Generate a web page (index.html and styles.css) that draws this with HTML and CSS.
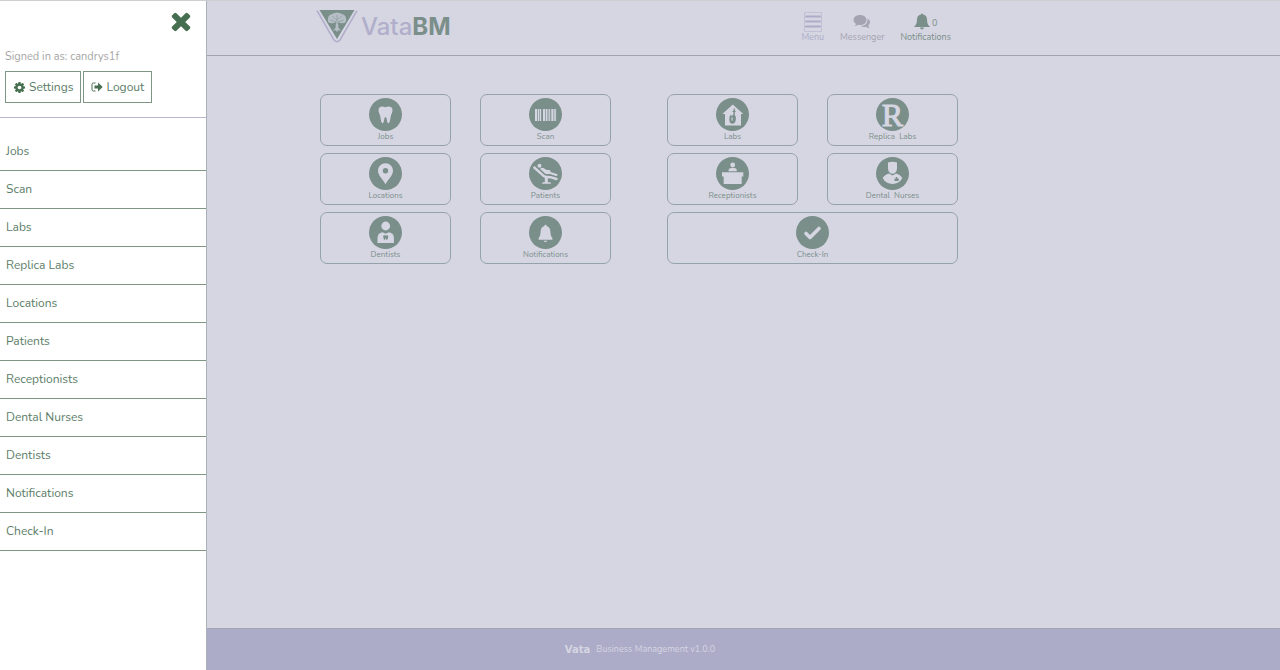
FILE: index.html
```html
<!DOCTYPE html>
<html lang="en">
<head>
    <meta charset="UTF-8">
    <meta name="viewport" content="width=device-width, initial-scale=1.0">
    <title>VataBM</title>
    <link rel="stylesheet" href="styles.css">
</head>
<body>
    <header class="header">
        <div class="header-inner">
            <a href="#" class="logo">
                <svg class="logo-mark" viewBox="0 0 42 33">
                    <path d="M1 .6L18 30Q21 33.500 24 30L41 .6" fill="none" stroke="#b0aecb" stroke-width="1.600"/>
                    <path d="M3.500 0h35L21 29z" fill="#7a8e8a"/>
                    <path d="M20 12q-3 2-6 1-3-1-2-4 0-4 4-5 5-3 10 0 4 1 4 5 1 3-2 4-3 1-6-1l.5 6 3 3-3-1-1.500 2-1.500-2-3 1 3-3z" fill="#b4bec4"/>
                    <path d="M21 14V5M21 10l-5-4M21 10l5-4M20 12l-6-2M22 12l6-2" fill="none" stroke="#8d9fa0" stroke-width=".7"/>
                </svg>
                <span class="logo-text">Vata<b>BM</b></span>
            </a>
            <nav class="top-nav">
                <a href="#" class="top-link light">
                    <span class="top-icon">
                        <svg width="18" height="20" viewBox="0 0 18 20" fill="none" stroke="#acabc8">
                            <path d="M.5.5h17v19H.5z" stroke-dasharray="2 1" stroke-width=".7"/>
                            <path d="M2 4.500h14M2 9.500h14M2 14.500h14" stroke-width="2" stroke-linecap="round"/>
                        </svg>
                    </span>
                    <span>Menu</span>
                </a>
                <a href="#" class="top-link grey">
                    <span class="top-icon">
                        <svg width="18" height="14" viewBox="0 0 18 14" fill="#a3a3b1">
                            <path d="M7 0c4 0 6.500 2.200 6.500 5S11 10 7 10q-1 0-2-.2Q3.500 11 1.500 11.200 2.700 10.300 3 9 .5 7.700.5 5C.5 2.200 3 0 7 0z"/>
                            <path d="M14.500 3.500q2.500 1.300 2.500 3.800 0 2-1.800 3.200.3 1.500 1.500 2.400-2.200 0-3.700-1.200-3 .6-5.300-.7 6.300-.5 6.800-5.500z"/>
                        </svg>
                    </span>
                    <span>Messenger</span>
                </a>
                <a href="#" class="top-link">
                    <span class="top-icon">
                        <svg width="16" height="20" viewBox="0 0 16 20" fill="#7a8e8a">
                            <path d="M7 2.500a1 1 0 0 1 2 0q4 .8 4 5 0 5 3 7.500H0q3-2.500 3-7.500 0-4.200 4-5zM6 15.500h4q-.3 2-2 2t-2-2z"/>
                        </svg>
                        <span class="count">0</span>
                    </span>
                    <span>Notifications</span>
                </a>
            </nav>
        </div>
    </header>

    <main class="main">
        <div class="tiles">
            <div class="tile-group">
                <a href="#" class="tile">
                    <svg class="tile-icon" viewBox="0 0 33 33">
                        <circle cx="16.500" cy="16.500" r="16.500"/>
                        <path class="fg" d="M16.300 9.300C20 7.500 23.500 8.300 23.500 12c0 2.500-1.200 4-1.700 6-.6 3-.8 7-2.500 7.300-1.500 0-1.200-6.300-2.800-6.300s-1.300 6.300-2.800 6.300C12 25 11.800 21 11.200 18c-.5-2-1.700-3.500-1.700-6 0-3.700 3.500-4.500 6.800-2.700z"/>
                    </svg>
                    <span>Jobs</span>
                </a>
                <a href="#" class="tile">
                    <svg class="tile-icon" viewBox="0 0 33 33">
                        <circle cx="16.500" cy="16.500" r="16.500"/>
                        <path class="fg" d="M6 11h2.300v12H6zM9 11h1v12H9zM10.600 11h1.600v12h-1.600zM14 11h2.300v12H14zM17 11h1v12h-1zM18.500 11h1v12h-1zM20.200 11h1v12h-1zM22.300 11h2.200v12h-2.200zM25 11h.8v12H25zM26.200 11h.9v12h-.9z"/>
                    </svg>
                    <span>Scan</span>
                </a>
                <a href="#" class="tile">
                    <svg class="tile-icon" viewBox="0 0 33 33">
                        <circle cx="16.500" cy="16.500" r="16.500"/>
                        <path class="fg" fill-rule="evenodd" d="M16.500 6.300c4.200 0 7.500 3.200 7.500 7.400 0 4.800-4.500 8-7.500 13.500C13.500 21.700 9 18.500 9 13.700c0-4.200 3.300-7.400 7.500-7.400zm0 4.700a2.700 2.700 0 1 0 0 5.400 2.700 2.700 0 0 0 0-5.400z"/>
                    </svg>
                    <span>Locations</span>
                </a>
                <a href="#" class="tile">
                    <svg class="tile-icon" viewBox="0 0 33 33">
                        <circle cx="16.500" cy="16.500" r="16.500"/>
                        <circle class="fg" cx="10.500" cy="8.700" r="2"/>
                        <path class="fg-line" d="M5.300 10.500l9 8.200q1.500 1.200 3.700 1.300l3.500.2 6 1.800" stroke-width="2.400"/>
                        <path class="fg-line" d="M12.300 11.800l4.700 4.200h4.300l6.200 2M14 11.800l3.500 2.200h3" stroke-width="2"/>
                        <path class="fg" d="M15.800 20h3v5.300h2.200q1 0 1 1.500h-9q0-1.500 1-1.500h1.800z"/>
                    </svg>
                    <span>Patients</span>
                </a>
                <a href="#" class="tile">
                    <svg class="tile-icon" viewBox="0 0 33 33">
                        <circle cx="16.500" cy="16.500" r="16.500"/>
                        <circle class="fg" cx="16.700" cy="10" r="4.400"/>
                        <path class="fg" d="M8.500 27v-5q0-5 5-5.800l3.200 1.500 3.200-1.500q5 .8 5 5.800v5z"/>
                        <path d="M16.700 19.500q2.500-1 2.500.8c0 1.200-.6 3.700-1.400 3.700-.7 0-.5-1.800-1.100-1.800s-.4 1.800-1.100 1.800c-.8 0-1.400-2.500-1.400-3.700q0-1.800 2.500-.8z"/>
                    </svg>
                    <span>Dentists</span>
                </a>
                <a href="#" class="tile">
                    <svg class="tile-icon" viewBox="0 0 33 33">
                        <circle cx="16.500" cy="16.500" r="16.500"/>
                        <path class="fg" d="M15.300 10q.2-1.300 1.200-1.300t1.200 1.300q3.500 1 3.700 5.500.2 5 2 6.500v1.700H9.600V22q1.800-1.500 2-6.500.2-4.500 3.700-5.500zM14.500 24.700h4q-.6 1.400-2 1.400t-2-1.400z"/>
                    </svg>
                    <span>Notifications</span>
                </a>
            </div>
            <div class="tile-group">
                <a href="#" class="tile">
                    <svg class="tile-icon" viewBox="0 0 33 33">
                        <circle cx="16.500" cy="16.500" r="16.500"/>
                        <path class="fg" d="M16.800 6.500L27.300 16H25v11.600H9V16H6.300z"/>
                        <path d="M14.500 17q1.500 1 2.500.2l.6-3-1.600-.9 1.600-.7.200-2.400 1.200.5-.2 1.800 1.200 1-1.200.8v2.900q1.500 1 1.100 4-.6 4.500-3.400 4.500-3.200 0-3.200-4.500 0-2.800 1.200-4.200z"/>
                        <path class="fg" d="M15.500 19.300l1.300.4-.4 3h-.9z"/>
                    </svg>
                    <span>Labs</span>
                </a>
                <a href="#" class="tile">
                    <svg class="tile-icon" viewBox="0 0 33 33">
                        <circle cx="16.500" cy="16.500" r="16.500"/>
                        <text class="fg letter" x="16.500" y="27.500" text-anchor="middle">R</text>
                    </svg>
                    <span>Replica&nbsp; Labs</span>
                </a>
                <a href="#" class="tile">
                    <svg class="tile-icon" viewBox="0 0 33 33">
                        <circle cx="16.500" cy="16.500" r="16.500"/>
                        <circle class="fg" cx="16.700" cy="8" r="2.400"/>
                        <path class="fg" d="M12.500 14.300q0-3.300 2.800-3.300h2.800q2.800 0 2.800 3.300zM6 15.200h21.300v4.300h-1.600V27h-18v-7.500H6z"/>
                    </svg>
                    <span>Receptionists</span>
                </a>
                <a href="#" class="tile">
                    <svg class="tile-icon" viewBox="0 0 33 33">
                        <circle cx="16.500" cy="16.500" r="16.500"/>
                        <path class="fg" d="M12 5.500q4.500-1.300 9 0v6q0 3-2 4.500-2.500 1.500-5 0-2-1.500-2-4.500zM13 16.500l3.500 2 3.500-2q4.500 1 6.300 4.800-3.300 5.700-9.800 5.700t-9.800-5.700Q8.500 17.500 13 16.500z"/>
                        <path d="M18.500 21.500h1.300V20h1.400v1.500h1.500V24h-4.200z"/>
                    </svg>
                    <span>Dental&nbsp; Nurses</span>
                </a>
                <a href="#" class="tile wide">
                    <svg class="tile-icon" viewBox="0 0 33 33">
                        <circle cx="16.500" cy="16.500" r="16.500"/>
                        <path class="fg-line" d="M10 17.500l4 4 9-9" stroke-width="3.600"/>
                    </svg>
                    <span>Check-In</span>
                </a>
            </div>
        </div>
    </main>

    <footer class="footer">
        <b class="brand">Vata</b>
        <span>Business Management v1.0.0</span>
    </footer>

    <aside class="sidebar">
        <div class="account">
            <button type="button" class="close-btn" aria-label="Close">
                <svg width="28" height="28" viewBox="0 0 1792 1792" fill="#456f50"><path d="M1490 1322q0 40-28 68l-136 136q-28 28-68 28t-68-28l-294-294-294 294q-28 28-68 28t-68-28l-136-136q-28-28-28-68t28-68l294-294-294-294q-28-28-28-68t28-68l136-136q28-28 68-28t68 28l294 294 294-294q28-28 68-28t68 28l136 136q28 28 28 68t-28 68l-294 294 294 294q28 28 28 68z"/></svg>
            </button>
            <p class="signed-in">Signed in as: candrys1f</p>
            <div class="account-actions">
                <button type="button" class="btn">
                    <svg width="13" height="13" viewBox="0 0 1792 1792" fill="#456f50"><path d="M1152 896q0-106-75-181t-181-75-181 75-75 181 75 181 181 75 181-75 75-181zm512-109v222q0 12-8 23t-20 13l-185 28q-19 54-39 91 35 50 107 138 10 12 10 25t-9 23q-27 37-99 108t-94 71q-12 0-26-9l-138-108q-44 23-91 38-16 136-29 186-7 28-36 28h-222q-14 0-24.500-8.500t-11.500-21.500l-28-184q-49-16-90-37l-141 107q-10 9-25 9-14 0-25-11-126-114-165-168-7-10-7-23 0-12 8-23 15-21 51-66.500t54-70.500q-27-50-41-99l-183-27q-13-2-21-12.500t-8-23.500v-222q0-12 8-23t19-13l186-28q14-46 39-92-40-57-107-138-10-12-10-24 0-10 9-23 26-36 98.500-107.500t94.500-71.500q13 0 26 10l138 107q44-23 91-38 16-136 29-186 7-28 36-28h222q14 0 24.500 8.500t11.500 21.500l28 184q49 16 90 37l142-107q9-9 24-9 13 0 25 10 129 119 165 170 7 8 7 22 0 12-8 23-15 21-51 66.500t-54 70.500q26 50 41 98l183 28q13 2 21 12.500t8 23.500z"/></svg>
                    Settings
                </button>
                <button type="button" class="btn">
                    <svg width="12" height="10" viewBox="0 0 12 10"><path d="M4.500 1H2.500Q1 1 1 2.500v5Q1 9 2.500 9h2" fill="none" stroke="#456f50"/><path d="M3.500 3.500H7v-3L11.700 5 7 9.500v-3H3.500z" fill="#456f50"/></svg>
                    Logout
                </button>
            </div>
        </div>
        <nav class="side-nav">
            <a href="#">Jobs</a>
            <a href="#">Scan</a>
            <a href="#">Labs</a>
            <a href="#">Replica Labs</a>
            <a href="#">Locations</a>
            <a href="#">Patients</a>
            <a href="#">Receptionists</a>
            <a href="#">Dental Nurses</a>
            <a href="#">Dentists</a>
            <a href="#">Notifications</a>
            <a href="#">Check-In</a>
        </nav>
    </aside>
</body>
</html>
```
FILE: styles.css
```css
:root {
    --bg: #d6d6e2;
    --lavender: #acabc8;
    --sage: #7a8e8a;
    --green: #5c7d68;
    --line: #7f9684;
}

* {
    box-sizing: border-box;
    margin: 0;
    padding: 0;
}

body {
    background-color: var(--bg);
    color: var(--sage);
    font-family: Nunito, Lato, sans-serif;
    font-size: 12px;
    min-height: 100vh;
    display: flex;
    flex-direction: column;
    border-top: 1px solid #cfcfd3;
}

a {
    color: inherit;
    text-decoration: none;
}

/* header */
.header {
    border-bottom: 1px solid #a0a4b2;
}

.header-inner {
    max-width: 648px;
    height: 54px;
    margin: 0 auto;
    padding: 0 13px 3px 0;
    display: flex;
    justify-content: space-between;
    align-items: center;
}

.logo {
    display: flex;
    align-items: center;
    gap: 3px;
}

.logo-mark {
    width: 42px;
    height: 33px;
}

.logo-text {
    font-family: Inter, sans-serif;
    font-size: 24px;
    font-weight: 500;
    color: #b0aecb;
}

.logo-text b {
    color: var(--sage);
}

.top-nav {
    display: flex;
    gap: 16px;
}

.top-link {
    display: flex;
    flex-direction: column;
    align-items: center;
    font-size: 9px;
    line-height: 10px;
}

.top-link.light {
    color: var(--lavender);
}

.top-link.grey {
    color: #a3a3b1;
}

.top-icon {
    height: 20px;
    display: flex;
    align-items: center;
    gap: 2px;
}

.count {
    padding-top: 3px;
}

/* tiles */
.main {
    flex: 1;
    padding-top: 38px;
}

.tiles {
    max-width: 640px;
    margin: 0 auto;
    padding-right: 2px;
    display: grid;
    grid-template-columns: 1fr 1fr;
    gap: 56px;
}

.tile-group {
    display: grid;
    grid-template-columns: 1fr 1fr;
    gap: 7px 29px;
    align-content: start;
}

.tile {
    height: 52px;
    padding-top: 3px;
    display: flex;
    flex-direction: column;
    align-items: center;
    border: 1px solid #94a3aa;
    border-radius: 7px;
    font-size: 8px;
    line-height: 12px;
}

.tile.wide {
    grid-column: span 2;
}

.tile-icon {
    width: 33px;
    height: 33px;
    fill: var(--sage);
}

.fg {
    fill: var(--bg);
}

.fg-line {
    fill: none;
    stroke: var(--bg);
    stroke-linecap: round;
    stroke-linejoin: round;
}

.letter {
    font: 32px "Liberation Serif", serif;
    stroke: var(--bg);
    stroke-width: 1px;
}

/* footer */
.footer {
    height: 42px;
    padding-bottom: 1px;
    display: flex;
    justify-content: center;
    align-items: center;
    gap: 6px;
    background-color: var(--lavender);
    border-top: 1px solid #a3a5b5;
    color: var(--bg);
    font-size: 9px;
}

.brand {
    font-family: "DejaVu Sans", sans-serif;
    font-size: 10px;
}

/* sidebar */
.sidebar {
    position: fixed;
    top: 1px;
    left: 0;
    bottom: 0;
    width: 207px;
    background-color: white;
    border-right: 1px solid #a9b2b8;
    color: var(--green);
}

.account {
    display: flex;
    flex-direction: column;
    padding: 6px 5px 14px;
    border-bottom: 1px solid #b8b7cb;
}

.close-btn {
    align-self: flex-end;
    margin-right: 6px;
    height: 28px;
    border: none;
    background: none;
    cursor: pointer;
}

.signed-in {
    margin: 14px 0 6px;
    color: #a6a6a6;
    font-size: 11px;
    line-height: 16px;
}

.account-actions {
    display: flex;
    gap: 2px;
}

.btn {
    height: 32px;
    padding: 0 7px;
    display: flex;
    align-items: center;
    gap: 3px;
    background: white;
    border: 1px solid var(--line);
    color: var(--green);
    font: inherit;
    cursor: pointer;
}

.side-nav {
    margin-top: 15px;
}

.side-nav a {
    display: block;
    padding-left: 6px;
    border-bottom: 1px solid var(--line);
    line-height: 37px;
}
```
